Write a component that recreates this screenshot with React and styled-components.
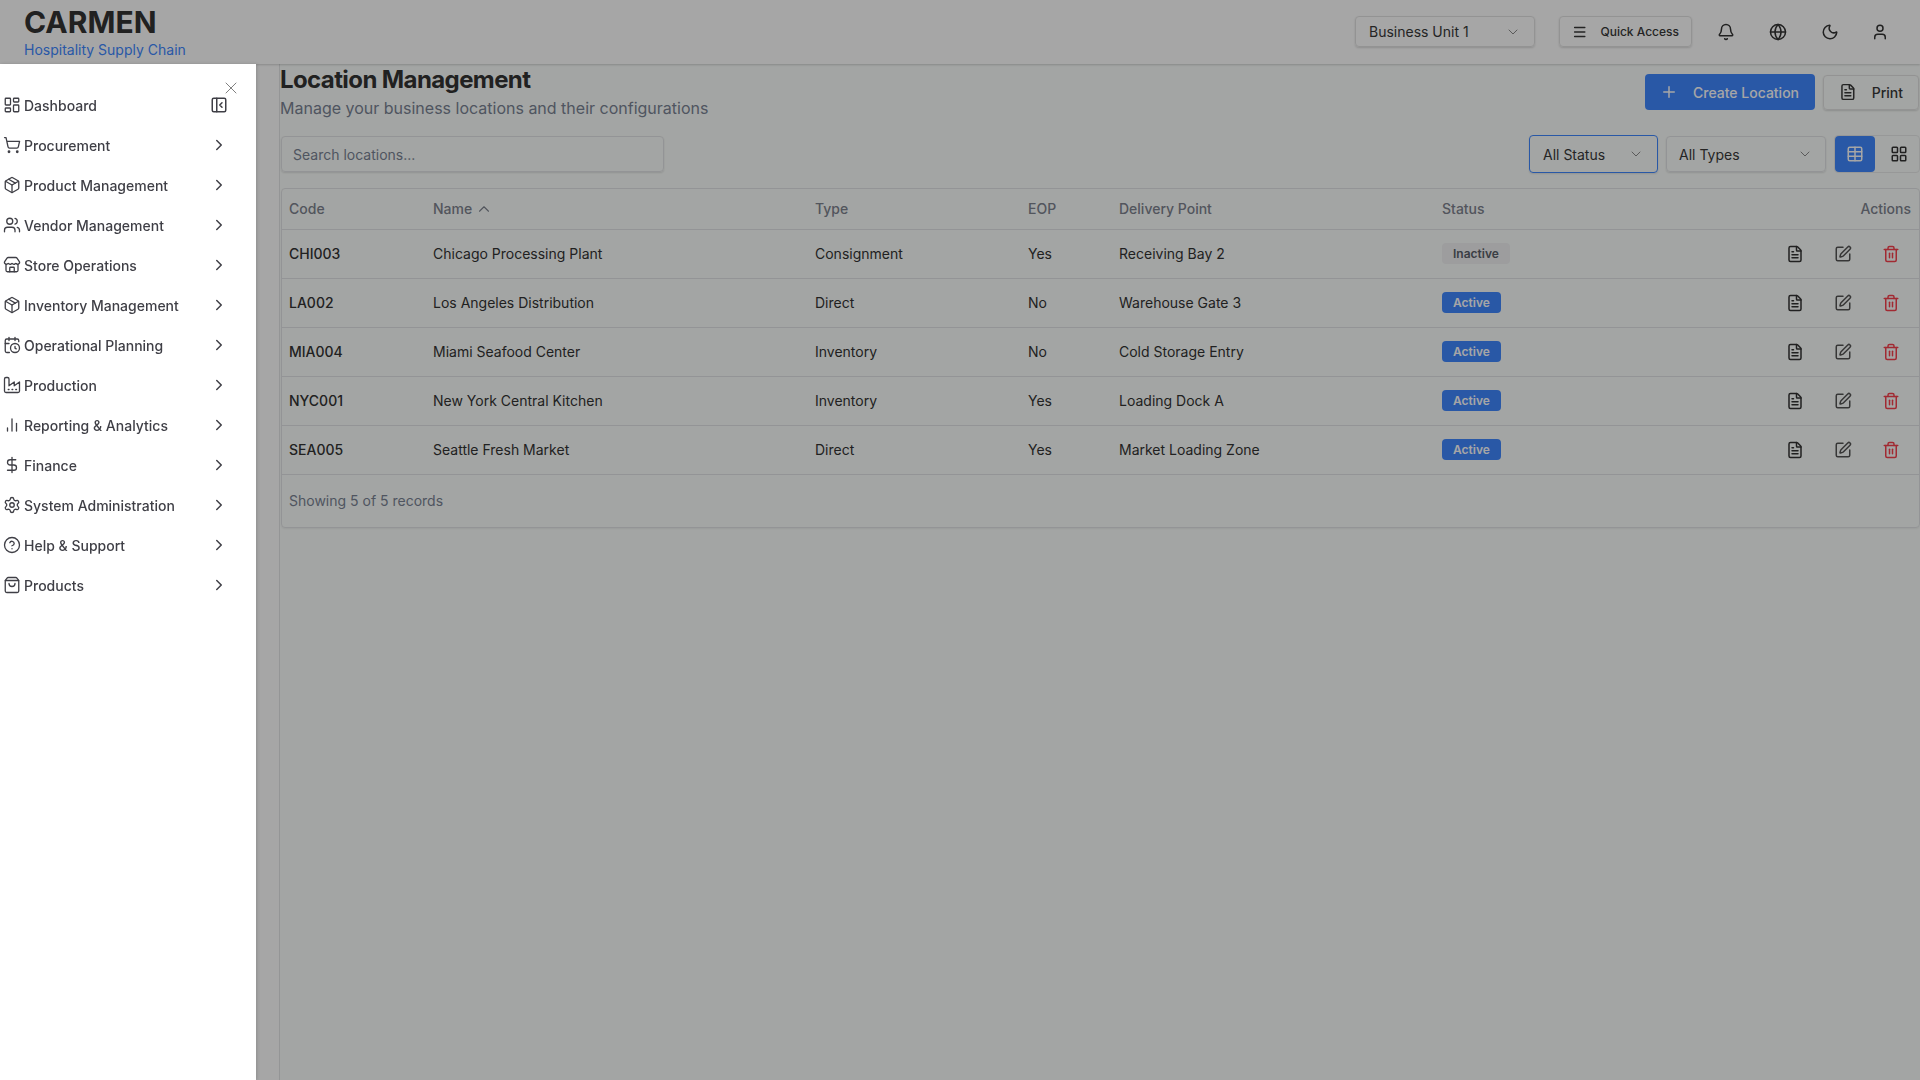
import React from "react";
import styled, { createGlobalStyle } from "styled-components";
import {
  Bell,
  CalendarClock,
  ChevronDown,
  ChevronRight,
  ChevronUp,
  CircleHelp,
  DollarSign,
  FileText,
  Globe,
  LayoutDashboard,
  LayoutGrid,
  Menu,
  Moon,
  Package,
  PanelLeftClose,
  Plus,
  Settings,
  ShoppingBag,
  ShoppingCart,
  SquarePen,
  Store,
  Table,
  Trash2,
  User,
  Users,
  X,
} from "lucide-react";

// these two are older lucide drawings, the current package has changed them
const LineIcon = ({ size, strokeWidth, children }) => (
  <svg
    width={size}
    height={size}
    viewBox="0 0 24 24"
    fill="none"
    stroke="currentColor"
    strokeWidth={strokeWidth}
    strokeLinecap="round"
    strokeLinejoin="round"
  >
    {children}
  </svg>
);

const FactoryIcon = (props) => (
  <LineIcon {...props}>
    <path d="M2 20a2 2 0 0 0 2 2h16a2 2 0 0 0 2-2V8l-7 5V8l-7 5V4a2 2 0 0 0-2-2H4a2 2 0 0 0-2 2Z" />
    <path d="M17 18h1" />
    <path d="M12 18h1" />
    <path d="M7 18h1" />
  </LineIcon>
);

const BarsIcon = (props) => (
  <LineIcon {...props}>
    <path d="M18 20V10" />
    <path d="M12 20V4" />
    <path d="M6 20v-4" />
  </LineIcon>
);

const navItems = [
  { label: "Procurement", icon: ShoppingCart },
  { label: "Product Management", icon: Package },
  { label: "Vendor Management", icon: Users },
  { label: "Store Operations", icon: Store },
  { label: "Inventory Management", icon: Package },
  { label: "Operational Planning", icon: CalendarClock },
  { label: "Production", icon: FactoryIcon },
  { label: "Reporting & Analytics", icon: BarsIcon },
  { label: "Finance", icon: DollarSign },
  { label: "System Administration", icon: Settings },
  { label: "Help & Support", icon: CircleHelp },
  { label: "Products", icon: ShoppingBag },
];

const locations = [
  { code: "CHI003", name: "Chicago Processing Plant", type: "Consignment", eop: "Yes", point: "Receiving Bay 2", status: "Inactive" },
  { code: "LA002", name: "Los Angeles Distribution", type: "Direct", eop: "No", point: "Warehouse Gate 3", status: "Active" },
  { code: "MIA004", name: "Miami Seafood Center", type: "Inventory", eop: "No", point: "Cold Storage Entry", status: "Active" },
  { code: "NYC001", name: "New York Central Kitchen", type: "Inventory", eop: "Yes", point: "Loading Dock A", status: "Active" },
  { code: "SEA005", name: "Seattle Fresh Market", type: "Direct", eop: "Yes", point: "Market Loading Zone", status: "Active" },
];

const App = () => {
  return (
    <Page>
      <GlobalStyle />
      <Header>
        <Brand>
          <BrandName>CARMEN</BrandName>
          <BrandTag>Hospitality Supply Chain</BrandTag>
        </Brand>
        <HeaderRight>
          <UnitSelect>
            Business Unit 1
            <ChevronDown size={16} strokeWidth={1.5} color="#8b8b8b" />
          </UnitSelect>
          <QuickAccess>
            <Menu size={18} />
            Quick Access
          </QuickAccess>
          <HeaderIcons>
            <HeaderIcon><Bell size={18} /></HeaderIcon>
            <HeaderIcon><Globe size={18} /></HeaderIcon>
            <HeaderIcon><Moon size={18} /></HeaderIcon>
            <HeaderIcon $w={32}><User size={18} /></HeaderIcon>
          </HeaderIcons>
        </HeaderRight>
      </Header>
      <Body>
        <Sidebar>
          <CloseButton><X size={20} strokeWidth={1} /></CloseButton>
          <NavRow>
            <LayoutDashboard size={18} strokeWidth={1.75} />
            <NavLabel>Dashboard</NavLabel>
            <PanelLeftClose size={18} strokeWidth={2} />
          </NavRow>
          {navItems.map((item) => (
            <NavRow key={item.label}>
              <item.icon size={18} strokeWidth={1.75} />
              <NavLabel>{item.label}</NavLabel>
              <NavChevron><ChevronRight size={18} /></NavChevron>
            </NavRow>
          ))}
        </Sidebar>
        <Main>
          <TitleRow>
            <div>
              <Title>Location Management</Title>
              <Subtitle>Manage your business locations and their configurations</Subtitle>
            </div>
            <TitleActions>
              <PrimaryButton>
                <Plus size={18} />
                Create Location
              </PrimaryButton>
              <PrintButton>
                <FileText size={18} />
                Print
              </PrintButton>
            </TitleActions>
          </TitleRow>
          <FilterRow>
            <SearchBox>Search locations...</SearchBox>
            <Filters>
              <FilterSelect $focused $w={129}>
                All Status
                <ChevronDown size={16} strokeWidth={1.5} color="#8b8b8b" />
              </FilterSelect>
              <FilterSelect $w={160}>
                All Types
                <ChevronDown size={16} strokeWidth={1.5} color="#8b8b8b" />
              </FilterSelect>
              <ViewToggle>
                <ViewButton $active><Table size={18} /></ViewButton>
                <ViewButton><LayoutGrid size={18} /></ViewButton>
              </ViewToggle>
            </Filters>
          </FilterRow>
          <TableCard>
            <DataTable>
              <colgroup>
                <Col $w={143} />
                <Col $w={382} />
                <Col $w={213} />
                <Col $w={91} />
                <Col $w={323} />
                <Col $w={200} />
                <col />
              </colgroup>
              <thead>
                <tr>
                  <Th>Code</Th>
                  <Th>
                    <NameHead>
                      Name
                      <ChevronUp size={18} strokeWidth={1.5} />
                    </NameHead>
                  </Th>
                  <Th>Type</Th>
                  <Th>EOP</Th>
                  <Th>Delivery Point</Th>
                  <Th>Status</Th>
                  <Th $right>Actions</Th>
                </tr>
              </thead>
              <tbody>
                {locations.map((row) => (
                  <tr key={row.code}>
                    <Td $bold>{row.code}</Td>
                    <Td>{row.name}</Td>
                    <Td>{row.type}</Td>
                    <Td>{row.eop}</Td>
                    <Td>{row.point}</Td>
                    <Td>
                      <Badge $active={row.status === "Active"}>{row.status}</Badge>
                    </Td>
                    <Td>
                      <RowActions>
                        <RowAction><FileText size={18} /></RowAction>
                        <RowAction $muted><SquarePen size={18} /></RowAction>
                        <RowAction $danger><Trash2 size={18} /></RowAction>
                      </RowActions>
                    </Td>
                  </tr>
                ))}
              </tbody>
            </DataTable>
            <TableFooter>Showing 5 of 5 records</TableFooter>
          </TableCard>
        </Main>
      </Body>
      <Overlay />
    </Page>
  );
};

export default App;

const GlobalStyle = createGlobalStyle`
  * {
    box-sizing: border-box;
  }
  body {
    margin: 0;
    font-family: "Inter", "Liberation Sans", sans-serif;
    background: #ffffff;
  }
`;
const Page = styled.div`
  display: flex;
  flex-direction: column;
  height: 100vh;
  overflow: hidden;
`;
const Overlay = styled.div`
  position: fixed;
  inset: 0;
  z-index: 40;
  background: rgba(0, 0, 0, 0.35);
`;
const Header = styled.header`
  position: relative;
  z-index: 1;
  display: flex;
  justify-content: space-between;
  align-items: center;
  flex: none;
  height: 64px;
  padding: 0 24px;
  background: #ffffff;
  box-shadow: 0 1px 2px rgba(0, 0, 0, 0.18);
`;
const Brand = styled.div`
  display: flex;
  flex-direction: column;
  align-self: flex-start;
  padding-top: 5px;
`;
const BrandName = styled.div`
  margin-bottom: 1px;
  font-size: 30px;
  line-height: 34px;
  font-weight: 700;
  color: #333333;
`;
const BrandTag = styled.div`
  font-size: 14px;
  line-height: 20px;
  color: #4088ff;
`;
const HeaderRight = styled.div`
  display: flex;
  align-items: center;
  margin-bottom: 1px;
`;
const UnitSelect = styled.div`
  display: flex;
  justify-content: space-between;
  align-items: center;
  width: 180px;
  height: 31px;
  padding: 0 13px;
  margin-right: 24px;
  font-size: 14px;
  color: #383838;
  border: 1px solid #e2e2e2;
  border-radius: 4px;
  box-shadow: 0 1px 2px rgba(0, 0, 0, 0.15);
`;
const QuickAccess = styled.div`
  display: flex;
  align-items: center;
  gap: 13px;
  width: 133px;
  height: 31px;
  padding: 0 12px;
  font-size: 12px;
  font-weight: 500;
  white-space: nowrap;
  color: #383838;
  border: 1px solid #e2e2e2;
  border-radius: 4px;
  box-shadow: 0 1px 2px rgba(0, 0, 0, 0.15);
`;
const HeaderIcons = styled.div`
  display: flex;
  align-items: center;
  gap: 16px;
  margin-left: 16px;
`;
const HeaderIcon = styled.div`
  display: flex;
  justify-content: center;
  align-items: center;
  width: ${(p) => p.$w || 36}px;
  height: 36px;
  color: #333333;
`;
const Body = styled.div`
  display: flex;
  flex: 1;
  min-height: 0;
`;
const Sidebar = styled.aside`
  position: relative;
  z-index: 50;
  flex: none;
  width: 256px;
  padding: 21px 0 0 3px;
  background: #ffffff;
  box-shadow: 1px 0 3px rgba(0, 0, 0, 0.15);
`;
const CloseButton = styled.div`
  position: absolute;
  top: 14px;
  right: 15px;
  display: flex;
  color: #666666;
`;
const NavRow = styled.div`
  display: flex;
  align-items: center;
  gap: 3px;
  height: 40px;
  padding-right: 28px;
  color: #3f3f46;
  font-size: 14px;
  font-weight: 500;
`;
const NavLabel = styled.span`
  flex: 1;
`;
const NavChevron = styled.span`
  display: flex;
`;
const Main = styled.main`
  flex: 1;
  min-width: 0;
  margin-left: 23px;
  padding-top: 1px;
  background: #fbfefc;
  border-left: 1px solid #e3e5e6;
`;
const TitleRow = styled.div`
  display: flex;
  justify-content: space-between;
  align-items: flex-start;
`;
const Title = styled.h1`
  margin: 0;
  font-size: 24px;
  line-height: 30px;
  font-weight: 700;
  letter-spacing: -0.6px;
  color: #333333;
`;
const Subtitle = styled.p`
  margin: 1px 0 0;
  font-size: 16px;
  line-height: 24px;
  color: #7a8394;
`;
const TitleActions = styled.div`
  display: flex;
  align-items: center;
  gap: 8px;
  margin-top: 9px;
  margin-right: 1px;
`;
const PrimaryButton = styled.div`
  display: flex;
  align-items: center;
  gap: 15px;
  width: 170px;
  height: 36px;
  padding: 0 15px;
  font-size: 14px;
  font-weight: 500;
  white-space: nowrap;
  color: #ffffff;
  background: #4088ff;
  border-radius: 4px;
`;
const PrintButton = styled.div`
  display: flex;
  align-items: center;
  gap: 15px;
  width: 96px;
  height: 35px;
  padding: 0 15px;
  font-size: 14px;
  font-weight: 500;
  color: #383838;
  border: 1px solid #e2e2e2;
  border-radius: 4px;
  box-shadow: 0 1px 2px rgba(0, 0, 0, 0.15);
`;
const FilterRow = styled.div`
  display: flex;
  justify-content: space-between;
  align-items: center;
  margin-top: 15px;
`;
const SearchBox = styled.div`
  display: flex;
  align-items: center;
  width: 383px;
  height: 36px;
  margin-left: 1px;
  padding: 0 11px;
  font-size: 14px;
  color: #7a8394;
  border: 1px solid #e2e4e6;
  border-radius: 4px;
  box-shadow: 0 1px 2px rgba(0, 0, 0, 0.12);
`;
const Filters = styled.div`
  display: flex;
  align-items: center;
  gap: 8px;
`;
const FilterSelect = styled.div`
  display: flex;
  justify-content: space-between;
  align-items: center;
  width: ${(p) => p.$w}px;
  height: ${(p) => (p.$focused ? "38px" : "36px")};
  padding: 0 ${(p) => (p.$focused ? "13px" : "12px")};
  font-size: 14px;
  color: #383838;
  border: 1px solid ${(p) => (p.$focused ? "#4088ff" : "#e2e4e6")};
  border-radius: 4px;
  box-shadow: 0 1px 2px rgba(0, 0, 0, 0.12);
`;
const ViewToggle = styled.div`
  display: flex;
  border-radius: 4px;
  border: 1px solid #e8eaea;
`;
const ViewButton = styled.div`
  display: flex;
  justify-content: center;
  align-items: center;
  width: ${(p) => (p.$active ? "40px" : "44px")};
  height: 36px;
  padding-left: ${(p) => (p.$active ? "0" : "4px")};
  color: ${(p) => (p.$active ? "#ffffff" : "#333333")};
  background: ${(p) => (p.$active ? "#4088ff" : "transparent")};
  border-radius: 4px;
`;
const TableCard = styled.div`
  margin-top: 15px;
  margin-left: 1px;
  border: 1px solid #e2e4e6;
  border-radius: 4px;
  box-shadow: 0 1px 2px rgba(0, 0, 0, 0.06);
`;
const DataTable = styled.table`
  width: 100%;
  table-layout: fixed;
  border-collapse: collapse;
`;
const Col = styled.col`
  width: ${(p) => p.$w}px;
`;
const Th = styled.th`
  height: 40px;
  padding: 0 8px;
  font-size: 14px;
  font-weight: 500;
  text-align: ${(p) => (p.$right ? "right" : "left")};
  color: #7e838f;
  border-bottom: 1px solid #e2e4e6;
  &:first-child {
    padding-left: 7px;
  }
`;
const NameHead = styled.span`
  display: inline-flex;
  align-items: center;
  gap: 3px;
`;
const Td = styled.td`
  height: 49px;
  padding: 0 8px;
  font-size: 14px;
  font-weight: ${(p) => (p.$bold ? 500 : 400)};
  color: #333333;
  border-bottom: 1px solid #e2e4e6;
  &:first-child {
    padding-left: 7px;
  }
`;
const Badge = styled.span`
  display: inline-block;
  padding: 0 11px;
  font-size: 12px;
  line-height: 21px;
  font-weight: 600;
  border-radius: 4px;
  color: ${(p) => (p.$active ? "#ffffff" : "#5a5f69")};
  background: ${(p) => (p.$active ? "#4088ff" : "#f1f2f3")};
`;
const RowActions = styled.div`
  display: flex;
  justify-content: flex-end;
  gap: 8px;
`;
const RowAction = styled.div`
  display: flex;
  justify-content: center;
  align-items: center;
  width: 40px;
  height: 32px;
  color: ${(p) => (p.$danger ? "#f8414e" : p.$muted ? "#555555" : "#333333")};
`;
const TableFooter = styled.div`
  display: flex;
  align-items: center;
  height: 52px;
  padding: 0 7px;
  font-size: 14px;
  color: #7a8394;
`;
